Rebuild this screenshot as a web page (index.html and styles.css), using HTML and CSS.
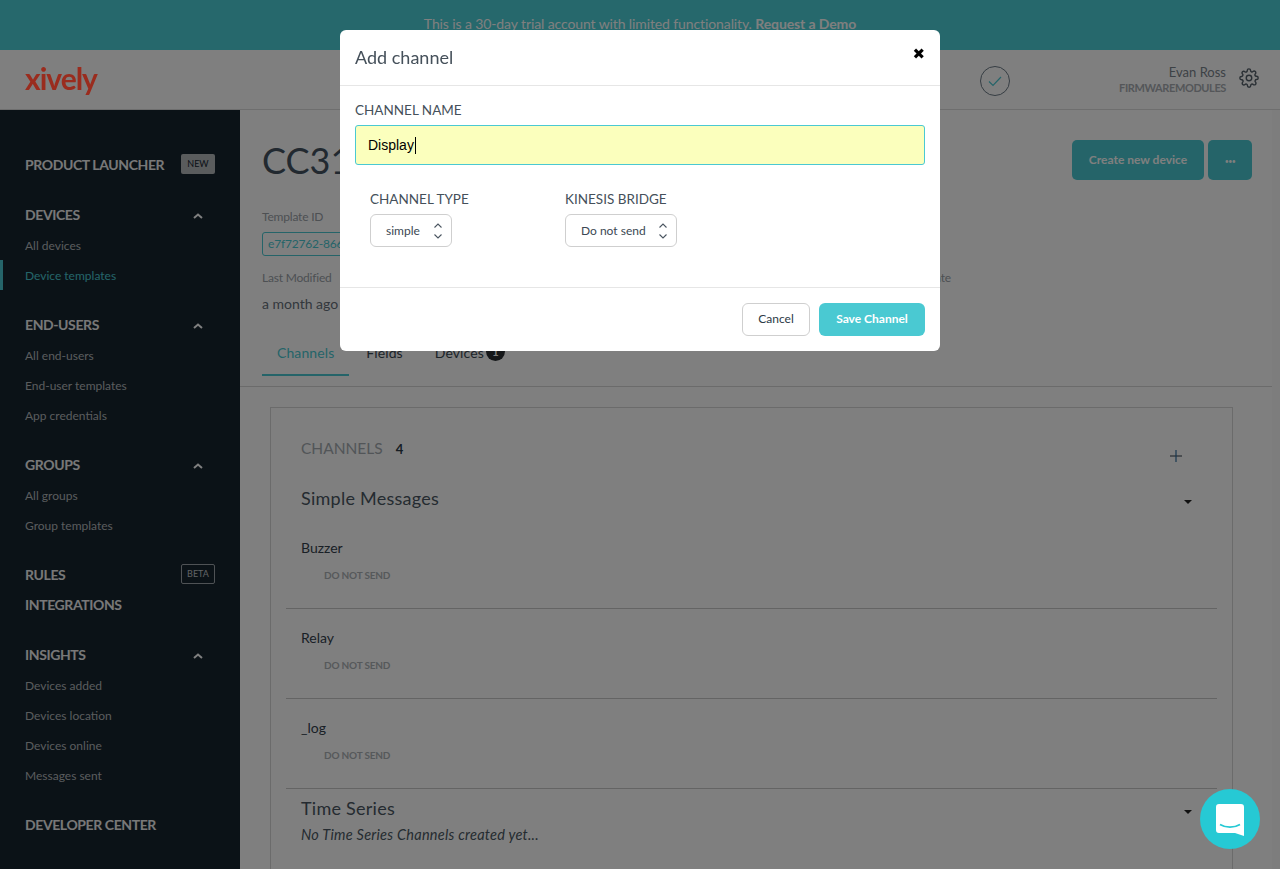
FILE: index.html
```html
<!DOCTYPE html>
<html lang="en">
<head>
<meta charset="utf-8">
<title>Add channel</title>
<link rel="stylesheet" href="styles.css">
</head>
<body>
<div class="page">
  <div class="banner">This is a 30-day trial account with limited functionality. <b>Request a Demo</b></div>
  <header class="topbar">
    <div class="logo">xively</div>
    <div class="topbar-right">
      <svg class="status" width="30" height="30" viewBox="0 0 30 30"><circle cx="15" cy="15" r="14.500" fill="none" stroke="#6c7a86" stroke-width="1"/><path d="M9 15.500l4 4 8-8.500" fill="none" stroke="#4ac9d2" stroke-width="1.200"/></svg>
      <div class="user"><div class="user-name">Evan Ross</div><div class="user-org">FIRMWAREMODULES</div></div>
      <svg class="gear" width="20" height="20" viewBox="0 0 24 24" fill="none" stroke="#55606a" stroke-width="1.700" stroke-linejoin="round"><circle cx="12" cy="12" r="3.300"/><path d="M19.400 15a1.650 1.650 0 0 0 .33 1.820l.06.06a2 2 0 1 1-2.830 2.830l-.06-.06a1.650 1.650 0 0 0-2.800 1.170V21a2 2 0 1 1-4 0v-.09a1.650 1.650 0 0 0-2.800-1.170l-.06.06a2 2 0 1 1-2.830-2.830l.06-.06a1.650 1.650 0 0 0-1.170-2.800H3a2 2 0 1 1 0-4h.09a1.650 1.650 0 0 0 1.170-2.800l-.06-.06a2 2 0 1 1 2.830-2.830l.06.06a1.650 1.650 0 0 0 2.800-1.170V3a2 2 0 1 1 4 0v.09a1.650 1.650 0 0 0 2.800 1.170l.06-.06a2 2 0 1 1 2.830 2.830l-.06.06a1.650 1.650 0 0 0 1.170 2.800H21a2 2 0 1 1 0 4h-.09a1.650 1.650 0 0 0-1.510 1z"/></svg>
    </div>
  </header>
  <div class="body-row">
    <nav class="sidebar">
      <div class="group"><div class="head">PRODUCT LAUNCHER<span class="tag tag-new">NEW</span></div></div>
      <div class="group">
        <div class="head">DEVICES<svg class="chev" width="10" height="6" viewBox="0 0 10 6"><path d="M1 5l4-3.500L9 5" fill="none" stroke="#fff" stroke-width="2"/></svg></div>
        <a class="sub">All devices</a>
        <a class="sub active">Device templates</a>
      </div>
      <div class="group">
        <div class="head">END-USERS<svg class="chev" width="10" height="6" viewBox="0 0 10 6"><path d="M1 5l4-3.500L9 5" fill="none" stroke="#fff" stroke-width="2"/></svg></div>
        <a class="sub">All end-users</a>
        <a class="sub">End-user templates</a>
        <a class="sub">App credentials</a>
      </div>
      <div class="group">
        <div class="head">GROUPS<svg class="chev" width="10" height="6" viewBox="0 0 10 6"><path d="M1 5l4-3.500L9 5" fill="none" stroke="#fff" stroke-width="2"/></svg></div>
        <a class="sub">All groups</a>
        <a class="sub">Group templates</a>
      </div>
      <div class="group">
        <div class="head head-tight">RULES<span class="tag tag-beta">BETA</span></div>
        <div class="head">INTEGRATIONS</div>
      </div>
      <div class="group">
        <div class="head">INSIGHTS<svg class="chev" width="10" height="6" viewBox="0 0 10 6"><path d="M1 5l4-3.500L9 5" fill="none" stroke="#fff" stroke-width="2"/></svg></div>
        <a class="sub">Devices added</a>
        <a class="sub">Devices location</a>
        <a class="sub">Devices online</a>
        <a class="sub">Messages sent</a>
      </div>
      <div class="group"><div class="head">DEVELOPER CENTER</div></div>
    </nav>
    <main class="main">
      <section class="summary">
        <div class="title-row">
          <h1 class="title">CC3100</h1>
          <div class="actions"><button class="btn-primary">Create new device</button><button class="btn-more">•••</button></div>
        </div>
        <div class="meta-label">Template ID</div>
        <div class="chip">e7f72762-8665-4a1c-9d3e-72c1</div>
        <div class="meta-row"><span class="meta-label">Last Modified</span><span class="meta-label">Last Update</span></div>
        <div class="meta-value">a month ago</div>
      </section>
      <div class="tabs">
        <span class="tab tab-active">Channels</span>
        <span class="tab">Fields</span>
        <span class="tab tab-last">Devices<span class="count">1</span></span>
      </div>
      <section class="card">
        <div class="card-head">
          <span class="card-title">CHANNELS</span><span class="card-count">4</span>
          <svg class="plus" width="12" height="12" viewBox="0 0 12 12"><path d="M0 6h12" stroke="#2c3a46" stroke-width="1"/><path d="M6 0v12" stroke="#2f6f9f" stroke-width="1.200"/></svg>
        </div>
        <div class="sec-head"><h2 class="sec-title">Simple Messages</h2><span class="caret-down"></span></div>
        <div class="channel channel-first"><div class="ch-name">Buzzer</div><div class="ch-send">DO NOT SEND</div></div>
        <div class="channel"><div class="ch-name">Relay</div><div class="ch-send">DO NOT SEND</div></div>
        <div class="channel"><div class="ch-name">_log</div><div class="ch-send">DO NOT SEND</div></div>
        <div class="sec-head sec-head-ts"><h2 class="sec-title">Time Series</h2><span class="caret-down"></span></div>
        <div class="empty">No Time Series Channels created yet...</div>
      </section>
    </main>
  </div>
</div>
<div class="overlay"></div>
<div class="modal">
  <div class="modal-head"><span class="modal-title">Add channel</span><span class="close">&#x2716;</span></div>
  <div class="modal-body">
    <div class="field-label">CHANNEL NAME</div>
    <div class="input"><span>Display</span><i class="cursor"></i></div>
    <div class="selects">
      <div class="sel-col sel-col-a">
        <div class="field-label">CHANNEL TYPE</div>
        <div class="select sel-a">simple<svg class="updown" width="10" height="18" viewBox="0 0 10 18"><path d="M1.500 5.500L5 2l3.500 3.500M1.500 12.500L5 16l3.500-3.500" fill="none" stroke="#4a5560" stroke-width="1.100"/></svg></div>
      </div>
      <div class="sel-col">
        <div class="field-label">KINESIS BRIDGE</div>
        <div class="select sel-b">Do not send<svg class="updown" width="10" height="18" viewBox="0 0 10 18"><path d="M1.500 5.500L5 2l3.500 3.500M1.500 12.500L5 16l3.500-3.500" fill="none" stroke="#4a5560" stroke-width="1.100"/></svg></div>
      </div>
    </div>
  </div>
  <div class="modal-foot"><button class="btn-cancel">Cancel</button><button class="btn-save">Save Channel</button></div>
</div>
<div class="chat">
  <svg width="28" height="33" viewBox="0 0 28 33"><path d="M3 0h22a3 3 0 0 1 3 3v29l-9-3H3a3 3 0 0 1-3-3V3a3 3 0 0 1 3-3z" fill="#fff"/><path d="M4 20.500c6 3.500 14 3.500 20 0" fill="none" stroke="#26c9d4" stroke-width="1.800"/></svg>
</div>
</body>
</html>
```
FILE: styles.css
```css
* { box-sizing: border-box; }
html, body { margin: 0; height: 869px; overflow: hidden; }
body { font-family: Lato, "Open Sans", sans-serif; color: #2c3a46; background: #fff; font-size: 14px; }
.page { display: flex; flex-direction: column; height: 869px; overflow: hidden; }

.banner { height: 50px; flex: none; background: #4cd0d8; color: #fff; text-align: center; font-size: 14px; padding-top: 15px; line-height: 18px; letter-spacing: -.11px; }
.topbar { height: 60px; flex: none; display: flex; align-items: center; justify-content: space-between; border-bottom: 1px solid #ddd; padding: 0 21px 0 25px; }
.logo { position: relative; z-index: 15; font-size: 30px; font-weight: 700; color: #9a2c1e; letter-spacing: -1px; line-height: 36px; margin-top: -4px; }
.topbar-right { display: flex; align-items: center; }
.status { margin-right: 109px; margin-top: 2px; }
.user { text-align: right; margin-right: 13px; margin-top: 1px; }
.user-name { font-size: 13px; line-height: 16px; color: #7a848c; }
.user-org { font-size: 11px; line-height: 16px; font-weight: 700; color: #a8adb2; letter-spacing: -.4px; }
.gear { margin-top: -3px; }

.body-row { flex: 1; display: flex; min-height: 0; }
.sidebar { width: 240px; flex: none; background: #16242f; padding: 39px 0 0 0; display: flex; flex-direction: column; gap: 19px; }
.group { display: flex; flex-direction: column; }
.head { height: 30px; margin-bottom: 1px; padding: 0 25px; display: flex; align-items: center; justify-content: space-between; font-size: 14px; font-weight: 700; color: #f1f1f1; letter-spacing: -.4px; }
.head-tight { margin-bottom: 0; }
.chev { margin-right: 12px; margin-top: 4px; }
.sub { height: 30px; padding: 0 0 0 25px; display: flex; align-items: center; font-size: 12px; color: #b4b8bb; }
.active { color: #4ac9d2; border-left: 3px solid #4ac9d2; padding-left: 22px; }
.tag { font-size: 9px; font-weight: 400; line-height: 19px; height: 20px; width: 34px; text-align: center; border-radius: 2px; letter-spacing: 0; }
.tag-new { background: #b4b8bb; color: #16242f; }
.tag-beta { border: 1px solid #9ea5aa; color: #c2c6c9; line-height: 18px; }

.main { flex: 1; min-width: 0; border-right: 8px solid #fbfbfb; }
.summary { height: 230px; padding: 30px 20px 0 22px; border-top: 1px solid #ddd; margin-top: -1px; }
.title-row { display: flex; justify-content: space-between; height: 69px; }
.title { margin: 0; font-size: 36px; line-height: 40px; font-weight: 400; color: #445260; }
.actions { display: flex; gap: 4px; }
.btn-primary, .btn-more, .btn-save, .btn-cancel { font-family: inherit; border: 0; border-radius: 5px; cursor: pointer; padding: 0 0 2px; }
.btn-primary { width: 132px; height: 40px; background: #4ac9d2; color: #fff; font-size: 12px; font-weight: 700; }
.btn-more { width: 44px; height: 40px; background: #4ac9d2; color: #fff; font-size: 7px; letter-spacing: -.5px; padding: 2px 0 0; }
.meta-label { font-size: 12px; line-height: 16px; color: #9aa1a7; display: block; letter-spacing: -.2px; }
.chip { margin-top: 7px; width: 240px; height: 24px; border: 1px solid #4ac9d2; border-radius: 3px; font-size: 12px; line-height: 22px; padding-left: 5px; color: #4ac9d2; letter-spacing: -.2px; white-space: nowrap; overflow: hidden; }
.meta-row { margin-top: 14px; display: flex; justify-content: space-between; width: 689px; }
.meta-value { margin-top: 9px; font-size: 14px; line-height: 18px; color: #66707a; }

.tabs { height: 48px; padding-left: 22px; display: flex; align-items: flex-start; border-bottom: 1px solid #d6d6d6; }
.tab { height: 37px; line-height: 28px; padding: 0 15px; font-size: 14px; color: #3b4853; margin-right: 2px; letter-spacing: .1px; }
.tab-active { color: #4ac9d2; border-bottom: 2px solid #4ac9d2; }
.tab-last { display: inline-flex; align-items: flex-start; }
.count { width: 19px; height: 19px; border-radius: 50%; background: #2a2f33; color: #fff; font-size: 11px; font-weight: 700; text-align: center; line-height: 20px; margin: 3px 0 0 2px; letter-spacing: 0; }

.card { margin: 20px 39px 0 30px; border: 1px solid #d6d6d6; padding: 0 15px; height: 600px; }
.card-head { height: 78px; padding: 30px 0 0 15px; display: flex; align-items: flex-start; }
.card-title { font-size: 15.500px; line-height: 20px; color: #a4abb1; }
.card-count { font-size: 13px; line-height: 22px; font-weight: 700; color: #2c3a46; margin-left: 13px; }
.plus { margin-left: auto; margin-right: 35px; margin-top: 12px; }
.sec-head { display: flex; align-items: center; justify-content: space-between; padding: 0 25px 0 15px; height: 24px; }
.sec-title { margin: 0; font-size: 18px; line-height: 24px; font-weight: 400; color: #4a5762; letter-spacing: .25px; }
.caret-down { width: 0; height: 0; border: 4px solid transparent; border-top: 4px solid #222; border-bottom: 0; margin-top: 8px; }
.channel { height: 90px; padding: 20px 15px 0; border-bottom: 1px solid #c8c8c8; }
.channel-first { height: 99px; padding-top: 29px; }
.ch-name { font-size: 14px; line-height: 18px; color: #34414d; }
.ch-send { font-size: 10px; line-height: 14px; font-weight: 700; color: #adb2b6; margin: 11px 0 0 23px; letter-spacing: -.2px; }
.sec-head-ts { margin-top: 7px; }
.empty { padding-left: 15px; font-size: 14.500px; line-height: 18px; font-style: italic; color: #4a5762; margin-top: 6px; letter-spacing: .25px; }

.overlay { position: fixed; inset: 0; background: rgba(0,0,0,.5); z-index: 10; }
.modal { position: fixed; z-index: 20; left: 340px; top: 30px; width: 600px; height: 321px; background: #fff; border-radius: 6px; display: flex; flex-direction: column; }
.modal-head { height: 56px; flex: none; border-bottom: 1px solid #e6e6e6; padding: 0 15px; position: relative; }
.modal-title { font-size: 18px; line-height: 54px; color: #45505a; }
.close { position: absolute; right: 15px; top: 14px; font-size: 15px; line-height: 20px; color: #000; font-family: "DejaVu Sans", sans-serif; }
.modal-body { flex: 1; padding: 15px 15px 0; }
.field-label { font-size: 13.500px; line-height: 18px; color: #45505a; }
.input { margin-top: 6px; height: 40px; background: #fbffbd; border: 1px solid #4ac9d2; border-radius: 3px; padding-left: 12px; display: flex; align-items: center; font-family: "Liberation Sans", Arial, sans-serif; font-size: 14px; color: #000; }
.cursor { width: 1px; height: 17px; background: #000; margin-left: 1px; }
.selects { display: flex; margin-top: 25px; padding-left: 15px; }
.sel-col-a { width: 195px; }
.select { margin-top: 6px; height: 33px; border: 1px solid #cfcfcf; border-radius: 6px; display: inline-flex; align-items: center; justify-content: space-between; font-size: 12px; color: #3b4853; padding: 0 8px 0 15px; }
.sel-a { width: 82px; }
.sel-b { width: 112px; }
.modal-foot { height: 64px; flex: none; border-top: 1px solid #e6e6e6; display: flex; justify-content: flex-end; align-items: flex-start; padding: 15px 15px 0; gap: 9px; }
.btn-cancel { width: 68px; height: 33px; background: #fff; border: 1px solid #cfcfcf; border-radius: 6px; font-size: 12px; color: #2c3a46; }
.btn-save { width: 106px; height: 33px; background: #4ac9d2; color: #fff; border-radius: 6px; font-size: 12px; font-weight: 700; }
.chat { position: fixed; z-index: 30; left: 1200px; top: 789px; width: 60px; height: 60px; border-radius: 50%; background: #26c9d4; display: flex; align-items: center; justify-content: center; padding-top: 2px; }
```
